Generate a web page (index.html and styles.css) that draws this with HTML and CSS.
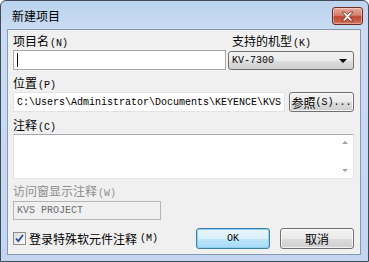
FILE: index.html
```html
<!DOCTYPE html>
<html lang="zh-CN">
    <head>
        <meta charset="UTF-8" />
        <title>新建项目</title>
        <link rel="stylesheet" href="styles.css">
    </head>
    <body>
        <!-- 对话框 -->
        <div class="dlg">
            <!-- 标题栏 -->
            <div class="titlebar">
                <span class="ttl">新建项目</span>
                <span class="closebtn">
                    <svg width="15" height="11" viewBox="0 0 15 11">
                        <path d="M2 1h3l2.5 2.6L10 1h3L9.2 5.5 13 10h-3L7.5 7.4 5 10H2l3.8-4.5z" fill="#fff" stroke="#6b2a1e" stroke-width="0.8"/>
                    </svg>
                </span>
            </div>
            <!-- 内容区 -->
            <div class="client">
                <div class="row1">
                    <div class="colL">
                        <div class="lbl">项目名<span class="en">(N)</span></div>
                        <div class="edit"><span class="caret"></span></div>
                    </div>
                    <div class="colR">
                        <div class="lbl">支持的机型<span class="en">(K)</span></div>
                        <div class="combo">
                            <span class="en">KV-7300</span>
                            <span class="arrow"></span>
                        </div>
                    </div>
                </div>

                <div class="lbl gap5">位置<span class="en">(P)</span></div>
                <div class="row2">
                    <div class="edit path en">C:\Users\Administrator\Documents\KEYENCE\KVS</div>
                    <div class="btn browse">参照<span class="en">(S)...</span></div>
                </div>

                <div class="lbl gap6">注释<span class="en">(C)</span></div>
                <div class="memo">
                    <div class="sbar">
                        <span class="up"></span>
                        <span class="down"></span>
                    </div>
                </div>

                <div class="lbl gap4 dis">访问窗显示注释<span class="en">(W)</span></div>
                <div class="edit disabled en">KVS PROJECT</div>

                <div class="row3">
                    <label class="chk">
                        <span class="box">
                            <svg width="9" height="9" viewBox="0 0 9 9">
                                <path d="M1 4.5l2.3 2.6L8 1" fill="none" stroke="#2a4b9b" stroke-width="1.8"/>
                            </svg>
                        </span>
                        登录特殊软元件注释<span class="en">(M)</span>
                    </label>
                    <div class="btns">
                        <div class="btn ok en">OK</div>
                        <div class="btn cancel">取消</div>
                    </div>
                </div>
            </div>
        </div>
    </body>
</html>
```

FILE: styles.css
```css
/* 기본 */
body {
    margin: 0;
    width: 369px;
    height: 262px;
    overflow: hidden;
    font-family: "Noto Sans CJK SC", sans-serif;
    font-size: 12px;
    color: #000;
}

/* 영문은 고정폭 */
.en {
    font-family: "Liberation Mono", monospace;
    font-size: 10px;
}

/* 창틀 */
.dlg {
    box-sizing: border-box;
    width: 369px;
    height: 262px;
    border: 1px solid #404a58;
    border-radius: 6px 6px 0 0;
    background: linear-gradient(to bottom, #bcd3ee 0, #c9dcf2 30px, #c2d6ef 100%);
    display: flex;
    flex-direction: column;
    padding: 0 7px 6px 6px;
}

/* 타이틀바 */
.titlebar {
    height: 28px;
    display: flex;
    align-items: center;
    justify-content: space-between;
}
.ttl {
    padding-left: 5px;
    padding-top: 1px;
    font-size: 12px;
}
.closebtn {
    box-sizing: border-box;
    width: 31px;
    height: 18px;
    margin-top: 2px;
    margin-right: -2px;
    border: 1px solid #6d2d22;
    border-radius: 3px;
    background: linear-gradient(to bottom, #e9a99c 0, #d7806c 45%, #c0452c 55%, #d5735b 100%);
    display: flex;
    align-items: center;
    justify-content: center;
    box-shadow: inset 0 0 0 1px rgba(255,255,255,0.35);
}

/* 클라이언트 */
.client {
    flex: 1;
    border: 1px solid #8799b1;
    background: #f0f0f0;
    padding: 3px 6px 0 5px;
}

.lbl {
    height: 16px;
    line-height: 16px;
    white-space: nowrap;
}
.lbl .en {
    padding-left: 1px;
}
.gap5 { margin-top: 5px; }
.gap6 { margin-top: 5px; }
.gap4 { margin-top: 4px; }
.dis { color: #8d8d8d; }

.row1 {
    display: flex;
    justify-content: space-between;
}
.colL { width: 213px; }
.colR { width: 126px; }
.colR .lbl { padding-left: 4px; }

/* 입력칸 */
.edit {
    box-sizing: border-box;
    height: 20px;
    margin-top: 1px;
    border: 1px solid #abadb3;
    border-top-color: #a0a4ab;
    background: #fff;
    display: flex;
    align-items: center;
    padding-left: 3px;
}
.caret {
    width: 1px;
    height: 14px;
    background: #000;
}

/* 콤보박스 */
.combo {
    box-sizing: border-box;
    height: 19px;
    margin-top: 2px;
    border: 1px solid #707070;
    border-radius: 3px;
    background: linear-gradient(to bottom, #f2f2f2 0, #ebebeb 50%, #dddddd 51%, #cfcfcf 100%);
    display: flex;
    align-items: center;
    justify-content: space-between;
    padding: 0 6px 0 3px;
}
.arrow {
    width: 0;
    height: 0;
    border-left: 4px solid transparent;
    border-right: 4px solid transparent;
    border-top: 4px solid #000;
}

.row2 {
    display: flex;
    justify-content: space-between;
    align-items: flex-start;
}
.path {
    width: 272px;
    white-space: nowrap;
    overflow: hidden;
    padding-left: 3px;
    border-color: #e3e3e3;
}

/* 버튼 */
.btn {
    box-sizing: border-box;
    border: 1px solid #707070;
    border-radius: 3px;
    background: linear-gradient(to bottom, #f2f2f2 0, #ebebeb 50%, #dddddd 51%, #cfcfcf 100%);
    box-shadow: inset 0 0 0 1px rgba(255,255,255,0.7);
    display: flex;
    align-items: center;
    justify-content: center;
}
.browse {
    width: 65px;
    height: 20px;
    margin-top: 1px;
}

/* 메모 */
.memo {
    box-sizing: border-box;
    height: 45px;
    margin-top: 1px;
    border: 1px solid #abadb3;
    border-color: #abadb3 #e2e3ea #e3e9ef #dbdfe6;
    background: #fff;
    display: flex;
    justify-content: flex-end;
}
.sbar {
    width: 17px;
    display: flex;
    flex-direction: column;
    justify-content: space-between;
    align-items: center;
    padding: 6px 0;
}
.up, .down {
    width: 0;
    height: 0;
    border-left: 3px solid transparent;
    border-right: 3px solid transparent;
}
.up { border-bottom: 3px solid #a3a3a3; }
.down { border-top: 3px solid #a3a3a3; }

.disabled {
    width: 148px;
    height: 19px;
    margin-top: 2px;
    background: #f0f0f0;
    color: #6d6d6d;
    border-color: #b5b5b5;
}

/* 아래줄 */
.row3 {
    display: flex;
    justify-content: space-between;
    align-items: center;
    margin-top: 8px;
}
.chk {
    display: flex;
    align-items: center;
    gap: 3px;
}
.box {
    box-sizing: border-box;
    width: 13px;
    height: 13px;
    border: 1px solid #8e8f8f;
    background: linear-gradient(135deg, #dcdcdc, #fbfbfb);
    display: flex;
    align-items: center;
    justify-content: center;
}
.btns {
    display: flex;
    gap: 10px;
}
.ok, .cancel {
    width: 74px;
    height: 21px;
}
.ok {
    border-color: #3c7fb1;
    background: linear-gradient(to bottom, #eaf6fd 0, #d9f0fc 50%, #bee6fd 51%, #a7d9f5 100%);
    box-shadow: inset 0 0 0 1px #8ed1f6;
}
```
